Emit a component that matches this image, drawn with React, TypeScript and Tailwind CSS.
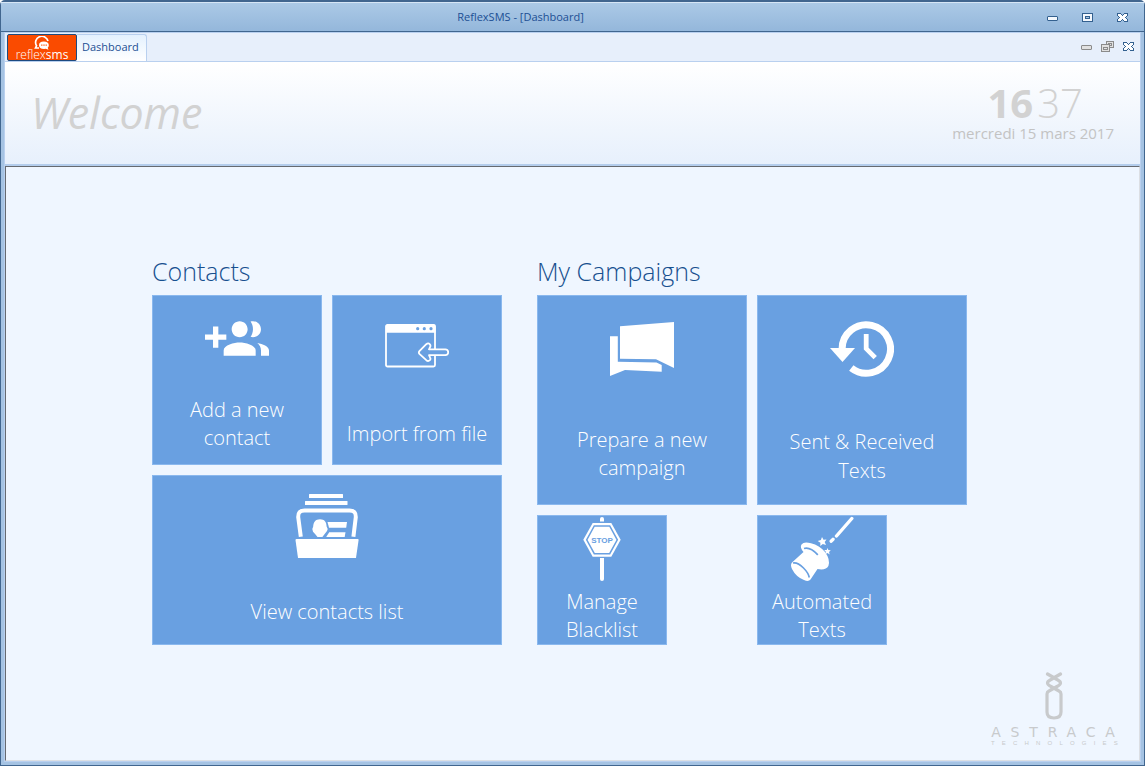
import type { ReactNode } from "react";

type TileProps = {
  label: ReactNode;
  icon: ReactNode;
  className: string;
};

function Tile({ label, icon, className }: TileProps) {
  return (
    <button
      type="button"
      className={`flex flex-col items-center justify-between border border-[#8ab8ee] bg-[#69a0e1] text-center text-[20px] font-light text-white hover:bg-[#5b95da] ${className}`}
    >
      {icon}
      <span>{label}</span>
    </button>
  );
}

function AddGroupIcon() {
  return (
    <svg width="64" height="35" viewBox="0 5 24 13" fill="#fff" aria-hidden="true">
      <path d="M8 10H5V7H3v3H0v2h3v3h2v-3h3v-2zm10 1c1.66 0 2.99-1.34 2.99-3S19.66 5 18 5c-.32 0-.63.05-.91.14.57.81.9 1.79.9 2.86s-.34 2.04-.9 2.86c.28.09.59.14.91.14zm-5 0c1.66 0 2.99-1.34 2.99-3S14.66 5 13 5s-3 1.34-3 3 1.34 3 3 3zm6.62 2.16c.83.73 1.38 1.66 1.38 2.84v2h3v-2c0-1.54-2.37-2.49-4.38-2.84zM13 13c-2 0-6 1-6 3v2h12v-2c0-2-4-3-6-3z" />
    </svg>
  );
}

function ImportIcon() {
  return (
    <svg width="64" height="44" viewBox="0 0 64 44" fill="none" aria-hidden="true">
      <rect x="1" y="1" width="49" height="41.5" rx="1.5" stroke="#fff" strokeWidth="1.8" />
      <path d="M1 2q0-1.5 1.5-1.5h46.5q1.5 0 1.5 1.5v6.7H1z" fill="#fff" />
      <g fill="#69a0e1">
        <circle cx="32.7" cy="4.7" r="1.6" />
        <circle cx="39.3" cy="4.7" r="1.6" />
        <circle cx="46" cy="4.7" r="1.6" />
      </g>
      <path
        d="M34.4 27.2 41.3 20.2Q43.2 18.6 44.9 20.3 46 21.6 45 23.2L44 25.3H60.3Q63.2 25.5 63.2 28.3 63.2 31 60.3 31.2H44L45 33.4Q46 35 44.9 36.2 43.2 37.8 41.3 36.2L34.4 29.8Q33.3 28.5 34.4 27.2Z"
        fill="#69a0e1"
        stroke="#fff"
        strokeWidth="1.8"
        strokeLinejoin="round"
      />
    </svg>
  );
}

function ContactsBoxIcon() {
  return (
    <svg width="64" height="65" viewBox="-1 0 64 65" fill="#fff" aria-hidden="true">
      <rect x="13" y="0" width="34" height="4" rx="0.5" />
      <rect x="9" y="7" width="42.5" height="4" rx="0.5" />
      <path
        d="M4.8 42.8 2.2 23Q1.8 16.5 8.5 16.5H53.5Q60.2 16.5 59.8 23L57.4 42.8"
        fill="none"
        stroke="#fff"
        strokeWidth="4"
      />
      <path d="M-.5 46Q-.5 45 .5 45H61.7Q62.7 45 62.6 46L60 64H2Z" />
      <path d="M24 25.2C28.5 25.2 30.5 28 30.6 32.5Q32.5 35 31 37L27.5 41.5Q27 43 25.5 43H21.5L19.5 40.5 17 37.7Q15.5 35 17.2 32.5C17.5 28 19.5 25.2 24 25.2Z" />
      <path d="M31.5 28H51L50.2 33.8H33Z" />
      <path d="M33.2 38.2H49.5L48.7 43H30.2Z" />
    </svg>
  );
}

function BannersIcon() {
  return (
    <svg width="64" height="54" viewBox="0 0 64 54" fill="#fff" aria-hidden="true">
      <path d="M10 4.3 64 0V46L46 37.3 10 36.8Z" />
      <path d="M0 14.3H7.8V39.8L46.5 40.5 51.7 43V49.7L15 48 0 54Z" />
    </svg>
  );
}

function HistoryIcon() {
  return (
    <svg width="64" height="56" viewBox="0 0 64 56" fill="none" aria-hidden="true">
      <path d="M12.1 28A24.2 24.2 0 1 1 21.3 47" stroke="#fff" strokeWidth="7" />
      <path d="M36.2 13V27.6L45.2 36.6" stroke="#fff" strokeWidth="4.8" />
      <path d="M0 27H25L12.5 41Z" fill="#fff" />
    </svg>
  );
}

function StopIcon() {
  return (
    <svg width="38" height="64" viewBox="0 0 38 64" aria-hidden="true">
      <path d="M17 4.5V2q0-2 2-2t2 2v2.5z" fill="#fff" />
      <path d="M17 41H21V62q0 2-2 2t-2-2z" fill="#fff" />
      <path d="M.3 22.8 9.7 6H28.3L37.7 22.8 28.3 39.7H9.7Z" fill="#fff" />
      <path
        d="M3.7 22.8 11.3 9H26.7L34.3 22.8 26.7 36.7H11.3Z"
        fill="#fff"
        stroke="#69a0e1"
        strokeWidth="1.5"
      />
      <text
        x="19"
        y="26"
        textAnchor="middle"
        fill="#69a0e1"
        className="font-['Liberation_Sans',sans-serif] text-[8px] font-bold"
      >
        STOP
      </text>
    </svg>
  );
}

function MagicHatIcon() {
  return (
    <svg width="64" height="66" viewBox="0 0 64 66" aria-hidden="true">
      <path d="M46.5 20 61.8 2.5M41.2 25.2 43 23.3" stroke="#fff" strokeWidth="3.4" strokeLinecap="round" />
      <path
        d="M13.5 36Q9.5 31 11.5 28.4 14 25.2 21 27.3 29.5 29.5 35 36 40.5 43.5 38.4 50 36 54.5 27.5 53L20.5 63.5Q18.5 66 14 64 6 61 2 53 0 48.5 2 46.5Z"
        fill="#fff"
      />
      <path d="M14 32.5Q20 30.5 27.8 38.8" fill="none" stroke="#69a0e1" strokeWidth="1.8" />
      <path d="M3 47Q7.5 46 13.5 52 18.5 57 19.3 61.5" fill="none" stroke="#69a0e1" strokeWidth="1.6" />
      <path d="m32 21 1.5 2.7 3-.2-1.8 2.5 1.3 3-3.2-1-2.5 2 .1-3.3-2.7-1.7 3.2-.9z" fill="#fff" />
      <path d="m37.5 32 .9 2 2.4.2-1.8 1.7.7 2.5-2.2-1.3-2.2 1.2.6-2.5-1.7-1.7 2.500-.2z" fill="#fff" />
    </svg>
  );
}

function ReflexLogo() {
  return (
    <a
      href="#home"
      aria-label="reflexsms"
      className="flex w-[70px] flex-col items-center justify-end rounded-[2px] border border-[#1d4a80] bg-[#fa4b00] text-white"
    >
      <svg width="16" height="14" viewBox="0 0 16 14" fill="none" aria-hidden="true">
        <path d="M5 12H1.5L2.5 9.8A6.3 6.3 0 1 1 14 5" stroke="#fff" strokeWidth="1.7" />
        <path d="M5 9.2Q5 5.6 9.8 5.6T14.8 9.2Q14.8 11 13.7 11.7L14.5 13.8 11.8 12.8Q5 13.5 5 9.2Z" fill="#fff" />
        <path d="M7.2 9.2h1.2m1 0h1.2m1 0h1.2" stroke="#fa4b00" strokeWidth="1.2" />
      </svg>
      <span className="text-[12px] font-light leading-[10px]">
        reflex<span className="font-normal">sms</span>
      </span>
    </a>
  );
}

function AstracaLogo() {
  return (
    <div className="flex flex-col items-center text-[#c8cacc]">
      <svg width="18" height="48" viewBox="0 0 18 48" fill="none" stroke="currentColor" aria-hidden="true">
        <path
          d="M2.5 2 12 7.5Q19 11 12 14.5L4 19Q2 20 2 22V40Q2 46 9 46T16 40V22Q16 20 14 19L6 14.5Q-1 11 6 7.5L15.5 2"
          strokeWidth="3.2"
          strokeLinecap="round"
          strokeLinejoin="round"
        />
      </svg>
      <span className="mt-1 pl-2 font-['DejaVu_Sans',sans-serif] text-[14px] leading-4 tracking-[0.7em]">
        ASTRACA
      </span>
      <span className="pl-2 font-['Liberation_Sans',sans-serif] text-[6px] leading-[6px] tracking-[1.2em]">
        TECHNOLOGIES
      </span>
    </div>
  );
}

function MinimizeIcon({ stroke, fill }: { stroke: string; fill: string }) {
  return (
    <svg width="11" height="11" viewBox="0 0 11 11" aria-hidden="true">
      <rect x=".5" y="4.5" width="10" height="4" rx=".5" fill={fill} stroke={stroke} />
    </svg>
  );
}

function MaximizeIcon() {
  return (
    <svg width="11" height="9" viewBox="0 0 11 9" aria-hidden="true">
      <rect x=".5" y=".5" width="10" height="8" fill="#f4f8fd" stroke="#33608f" />
      <rect x="3.5" y="3.5" width="4" height="2" fill="#a5c3e2" stroke="#33608f" />
    </svg>
  );
}

function RestoreIcon() {
  return (
    <svg width="13" height="11" viewBox="0 0 13 11" fill="#e1e1e1" stroke="#8b8b8b" aria-hidden="true">
      <rect x="5.5" y=".5" width="7" height="6" />
      <rect x="7.5" y="2.5" width="3" height="2" />
      <rect x=".5" y="3.5" width="8" height="7" />
      <rect x="2.5" y="6.5" width="4" height="2" />
    </svg>
  );
}

function CloseIcon() {
  return (
    <svg width="11" height="9" viewBox="0 0 11 9" shapeRendering="crispEdges" aria-hidden="true">
      <path
        d="M.5.5H3.5L5.5 2.5 7.5.5H10.5V2.5L8.5 4.5 10.5 6.5V8.5H7.5L5.5 6.5 3.5 8.5H.5V6.5L2.5 4.5.5 2.5Z"
        fill="#fff"
        stroke="#33608f"
      />
    </svg>
  );
}

export default function App() {
  return (
    <div className="flex min-h-screen flex-col rounded-t-[5px] border border-t-2 border-[#41668f] bg-[#a5c3e3] font-['Open_Sans','Noto_Sans',sans-serif]">
      <header className="grid h-[30px] grid-cols-[1fr_auto_1fr] items-center border-b border-t border-b-[#41668f] border-t-[#d6e6f6] bg-linear-to-b from-[#abc9e6] to-[#94b7db] text-[#1c4f94]">
        <h1 className="col-start-2 pr-26 text-[11px] leading-4">ReflexSMS - [Dashboard]</h1>
        <div className="flex items-center justify-end gap-6 pr-4">
          <button type="button" aria-label="Minimize window" className="flex">
            <MinimizeIcon stroke="#33608f" fill="#f4f8fd" />
          </button>
          <button type="button" aria-label="Maximize window" className="flex">
            <MaximizeIcon />
          </button>
          <button type="button" aria-label="Close window" className="flex">
            <CloseIcon />
          </button>
        </div>
      </header>

      <div className="mx-[3px] mb-[3px] flex flex-1 flex-col border border-[#b9d0ef] bg-[#eff6ff]">
        <nav className="flex h-[29px] items-end justify-between border-b border-[#b9d0ef] bg-[#e7effb] pl-0.5">
          <div className="flex h-[27px]">
            <ReflexLogo />
            <a
              href="#dashboard"
              aria-current="page"
              className="rounded-tr-[3px] border-r border-t border-[#b9d0ef] bg-linear-to-b from-[#e4f1fe] to-white px-[5px] pr-[7px] text-[11px] leading-[24px] text-[#1c4f94]"
            >
              Dashboard
            </a>
          </div>
          <div className="flex h-full items-center gap-[9px] pb-0.5 pr-1.5">
            <button type="button" aria-label="Minimize tab" className="flex">
              <MinimizeIcon stroke="#8b8b8b" fill="#e1e1e1" />
            </button>
            <button type="button" aria-label="Restore tab" className="flex">
              <RestoreIcon />
            </button>
            <button type="button" aria-label="Close tab" className="flex">
              <CloseIcon />
            </button>
          </div>
        </nav>

        <section className="flex h-[104px] items-center justify-between border-b-2 border-[#b4cdec] bg-linear-to-b from-white to-[#e7f0fc] px-[26px] text-[#d2d2d2]">
          <h2 className="text-[43px] italic leading-[56px]">Welcome</h2>
          <div className="flex flex-col items-center">
            <p className="flex gap-1 pl-1 text-[40px] leading-[40px]">
              <span className="font-bold">16</span>
              <span className="font-light">37</span>
            </p>
            <p className="text-[15px] leading-5 text-[#c3c3c3]">mercredi 15 mars 2017</p>
          </div>
        </section>

        <main className="flex flex-1 flex-col border border-b-[#dcdfe4] border-l-[#666a70] border-r-[#dcdfe4] border-t-[#666a70]">
          <div className="flex flex-1 justify-center gap-[35px] pr-[26px] pt-[85px]">
            <section>
              <h3 className="text-[25px] font-light leading-[38px] text-[#17508f]">Contacts</h3>
              <div className="mt-[5px] grid grid-cols-[170px_170px] gap-2.5">
                <Tile
                  label={<>Add a new<br />contact</>}
                  icon={<AddGroupIcon />}
                  className="h-[170px] pb-3 pt-[25px] leading-[28px]"
                />
                <Tile
                  label="Import from file"
                  icon={<ImportIcon />}
                  className="h-[170px] pb-4 pt-7 leading-[28px]"
                />
                <Tile
                  label="View contacts list"
                  icon={<ContactsBoxIcon />}
                  className="col-span-2 h-[170px] pb-[18px] pt-[18px] leading-[28px]"
                />
              </div>
            </section>
            <section>
              <h3 className="text-[25px] font-light leading-[38px] text-[#17508f]">My Campaigns</h3>
              <div className="mt-[5px] grid grid-cols-[210px_210px] gap-2.5">
                <Tile
                  label={<>Prepare a new<br />campaign</>}
                  icon={<BannersIcon />}
                  className="h-[210px] pb-[22px] pt-[26px] leading-[28px]"
                />
                <Tile
                  label={<>Sent &amp; Received<br />Texts</>}
                  icon={<HistoryIcon />}
                  className="h-[210px] pb-[19px] pt-[25px] leading-[29px]"
                />
                <Tile
                  label={<>Manage<br />Blacklist</>}
                  icon={<StopIcon />}
                  className="h-[130px] w-[130px] pt-px leading-[28px]"
                />
                <Tile
                  label={<>Automated<br />Texts</>}
                  icon={<MagicHatIcon />}
                  className="h-[130px] w-[130px] leading-[28px]"
                />
              </div>
            </section>
          </div>
          <footer className="flex justify-end pb-3.5 pr-3.5">
            <AstracaLogo />
          </footer>
        </main>
      </div>
    </div>
  );
}
